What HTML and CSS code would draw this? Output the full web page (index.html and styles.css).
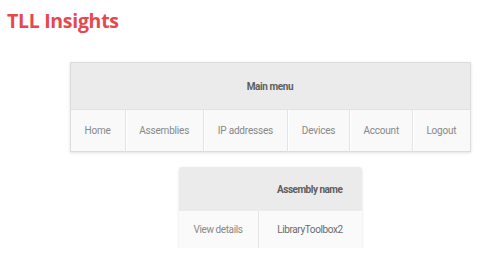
FILE: index.html
```html
<!DOCTYPE html>
<html>
<head>
<meta charset="utf-8">
<link rel="stylesheet" href="styles.css">
</head>
<body>
<h1 class="title">TLL Insights</h1>
<div class="content">
  <table class="menu">
    <colgroup>
      <col class="c-home"><col class="c-asm"><col class="c-ip"><col class="c-dev"><col class="c-acc"><col class="c-out">
    </colgroup>
    <thead>
      <tr><th colspan="6">Main menu</th></tr>
    </thead>
    <tbody>
      <tr>
        <td>Home</td>
        <td>Assemblies</td>
        <td>IP addresses</td>
        <td>Devices</td>
        <td>Account</td>
        <td>Logout</td>
      </tr>
    </tbody>
  </table>
  <table class="assemblies">
    <thead>
      <tr><th class="c-view"></th><th class="c-name">Assembly name</th></tr>
    </thead>
    <tbody>
      <tr><td class="c-view">View details</td><td class="c-name">LibraryToolbox2</td></tr>
    </tbody>
  </table>
</div>
</body>
</html>
```
FILE: styles.css
```css
html, body {
  margin: 0;
  padding: 0;
  background: #ffffff;
}
body {
  font-family: Roboto, "Liberation Sans", Arial, sans-serif;
}
.title {
  margin: 0;
  padding: 8px 0 0 7px;
  font-family: "Open Sans", sans-serif;
  font-weight: 700;
  font-size: 19.5px;
  line-height: 26px;
  color: #e5484d;
  letter-spacing: -0.3px;
}
.content {
  padding-left: 40px;
  display: flex;
  flex-direction: column;
  align-items: center;
}
table {
  border-collapse: collapse;
  font-size: 10px;
}
.menu {
  margin-top: 28px;
  width: 401px;
  table-layout: fixed;
  border: 1px solid #dcdcdc;
  box-shadow: 0 1px 3px rgba(0,0,0,0.12);
}
.menu th {
  height: 46px;
  background: #ebebeb;
  color: #5e5e5e;
  font-weight: 700;
  padding: 0;
  border-bottom: 1px solid #e2e2e2;
  letter-spacing: -0.4px;
}
.menu td {
  height: 41px;
  background: #f9f9f9;
  color: #888;
  text-align: center;
  padding: 0;
  border-left: 1px solid #e4e4e4;
  box-shadow: inset 1px 0 0 #ffffff;
  letter-spacing: -0.2px;
}
.menu td:first-child { border-left: none; box-shadow: none; }
.c-home { width: 55px; }
.c-asm { width: 78px; }
.c-ip { width: 84px; }
.c-dev { width: 62px; }
.c-acc { width: 63px; }
.c-out { width: 57px; }
.assemblies {
  margin-top: 15px;
  width: 183px;
  border-radius: 3px;
  box-shadow: 0 1px 3px rgba(0,0,0,0.13);
  overflow: hidden;
}
.assemblies th {
  height: 44px;
  background: #ebebeb;
  color: #5e5e5e;
  font-weight: 700;
  padding: 0;
  letter-spacing: -0.5px;
}
.assemblies td {
  height: 37px;
  background: #fafafa;
  color: #888;
  text-align: center;
  padding: 0;
  letter-spacing: -0.4px;
}
.assemblies .c-view { width: 79px; }
.assemblies td.c-name {
  border-left: 1px solid #e6e6e6;
  color: #6a6a6a;
}
```
